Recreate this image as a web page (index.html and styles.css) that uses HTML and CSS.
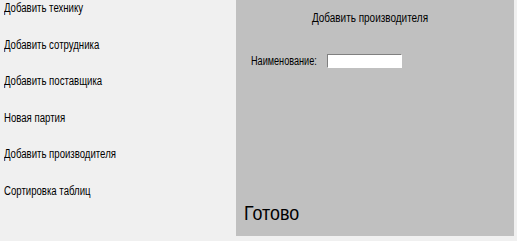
FILE: index.html
```html
<!DOCTYPE html>
<html lang="ru">
<head>
<meta charset="UTF-8">
<link rel="stylesheet" href="styles.css">
</head>
<body>
  <div class="app">
    <!-- Menu -->
    <ul class="menu">
      <li><span>Добавить технику</span></li>
      <li><span>Добавить сотрудника</span></li>
      <li><span>Добавить поставщика</span></li>
      <li><span>Новая партия</span></li>
      <li><span>Добавить производителя</span></li>
      <li><span>Сортировка таблиц</span></li>
    </ul>
    <!-- Form panel -->
    <div class="panel">
      <div class="panel-title"><span>Добавить производителя</span></div>
      <div class="field">
        <label for="name"><span>Наименование:</span></label>
        <input id="name" type="text">
      </div>
      <div class="status"><span>Готово</span></div>
    </div>
  </div>
</body>
</html>
```

FILE: styles.css
```css
body {
  margin: 0;
  background: #f0f0f0;
  font-family: "Liberation Sans", Arial, sans-serif;
  font-size: 12px;
  color: #000;
}

/* narrow system font look */
.menu span,
.panel span {
  display: inline-block;
  white-space: nowrap;
  transform-origin: left center;
  transform: scaleX(0.76);
}
.menu span {
  transform: scaleX(0.8);
}

.app {
  display: flex;
  height: 241px;
}

.menu {
  list-style: none;
  margin: 0;
  padding: 0 0 0 4px;
  width: 232px;
}
.menu li {
  height: 36.6px;
  line-height: 16px;
}

.panel {
  width: 278px;
  height: 236px;
  background: #c0c0c0;
  display: flex;
  flex-direction: column;
  box-sizing: border-box;
  padding: 10px 0 0 0;
}

.panel-title {
  line-height: 16px;
  text-align: center;
  padding-right: 10px;
}
.panel .panel-title span {
  transform-origin: center;
  transform: scaleX(0.83);
}

.field {
  display: flex;
  align-items: center;
  padding: 27px 0 0 15px;
  gap: 6px;
}
.field label {
  width: 70px;
  line-height: 16px;
}
.field input {
  width: 75px;
  height: 14px;
  box-sizing: border-box;
  margin: 0;
  padding: 0;
  border: 1px solid;
  border-color: #808080 #ffffff #ffffff #808080;
  background: #fff;
}

.status {
  margin-top: auto;
  margin-bottom: 11px;
  padding-left: 8px;
  font-size: 21px;
  line-height: 24px;
}
.panel .status span {
  transform: scaleX(0.85);
}
```
